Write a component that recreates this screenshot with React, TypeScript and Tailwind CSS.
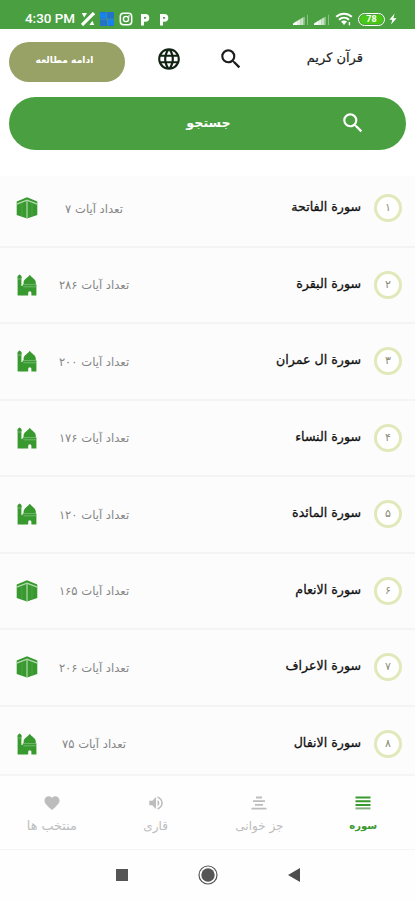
import { MdLanguage, MdSearch, MdVolumeUp, MdFavorite } from 'react-icons/md';

type Place = 'kaaba' | 'mosque';

interface Surah {
  number: string;
  title: string;
  verses: string;
  place: Place;
}

const surahs: Surah[] = [
  { number: '۱', title: 'سورة الفاتحة', verses: '۷', place: 'kaaba' },
  { number: '۲', title: 'سورة البقرة', verses: '۲۸۶', place: 'mosque' },
  { number: '۳', title: 'سورة ال عمران', verses: '۲۰۰', place: 'mosque' },
  { number: '۴', title: 'سورة النساء', verses: '۱۷۶', place: 'mosque' },
  { number: '۵', title: 'سورة المائدة', verses: '۱۲۰', place: 'mosque' },
  { number: '۶', title: 'سورة الانعام', verses: '۱۶۵', place: 'kaaba' },
  { number: '۷', title: 'سورة الاعراف', verses: '۲۰۶', place: 'kaaba' },
  { number: '۸', title: 'سورة الانفال', verses: '۷۵', place: 'mosque' },
];

const KaabaIcon = () => (
  <svg viewBox="0 0 22 22" className="h-[22px] w-[22px]" fill="#38992f">
    <path d="M11 0.2 21.3 4.6V18L11 21.6 0.7 18V4.6Z" />
    <path d="M0.7 7.2 11 3.2 21.3 7.2" fill="none" stroke="#b4dab0" strokeWidth="1.3" />
    <path d="M11 3.4V21" stroke="#a9d3a5" strokeWidth="1.3" />
    <path d="M6 6.5V19M16 6.5V19" stroke="#5dad56" strokeWidth="0.6" />
  </svg>
);

const MosqueIcon = () => (
  <svg viewBox="0 0 20 22" className="h-[22px] w-5" fill="#38992f">
    <path d="M2.6 0.4C3.8 1.2 4.8 2 4.8 3.2L4.4 4.6V12H6V21.4H0.6V4.6L0.4 3.2C0.4 2 1.4 1.2 2.6 0.4Z" />
    <path d="M12.8 0.8C14.4 3.6 18.8 5.2 18.8 8.6V11H6.6V8.6C6.6 5.2 11.2 3.6 12.8 0.8Z" />
    <path d="M5.6 10.6H19.4V21.4H14.4V18.8A1.6 1.6 0 0 0 11.2 18.8V21.4H5.6Z" />
    <path d="M6.4 10.6H19.4M6.4 12.8H19.4" stroke="#8cc587" strokeWidth="0.7" />
    <path d="M0.6 5H4.6" stroke="#8cc587" strokeWidth="0.7" />
  </svg>
);

const SignalIcon = () => (
  <svg viewBox="0 0 16 11" className="h-[11px] w-4" fill="#fff">
    <path d="M0 11V9.5L4 7V11Z" />
    <path d="M4 11V7L7.4 4.9V11Z" opacity=".85" />
    <path d="M7.4 11V4.9L10.6 3V11Z" opacity=".7" />
    <path d="M11 11V3.2L12 2.6V11ZM14 11V1L15 0.4V11Z" opacity=".35" />
  </svg>
);

const ParkingIcon = () => (
  <svg viewBox="0 0 10 13" className="h-[13px] w-[10px]" fill="none" stroke="#fff" strokeWidth="3">
    <path d="M2.5 12.5V2.4H5.4A2.3 2.3 0 0 1 5.4 7.2H2.5" />
  </svg>
);

const StatusBar = () => (
  <div className="flex h-[29px] items-center justify-between bg-[#4aa041] pt-[9px] pr-[18px] pl-[25px] text-white">
    <div className="flex items-center">
      <span className="w-[50px] font-['Roboto',sans-serif] text-[13.4px] leading-4 font-medium whitespace-nowrap">4:30 PM</span>
      <svg viewBox="0 0 14 14" className="ml-[6px] h-[14px] w-[14px]">
        <path d="M1 13 13 1" stroke="#fff" strokeWidth="3.2" />
        <path d="M0.8 1H6L3.2 5.4Z" fill="#fff" />
        <path d="M13.2 13H8.4L11.4 8.8Z" fill="#fff" />
      </svg>
      <svg viewBox="0 0 14 14" className="ml-[5px] h-[14px] w-[14px]">
        <path d="M0 0H14V14H0Z" fill="#2373c8" />
        <path d="M0 1H6V6H0ZM8 8H14V13H8Z" fill="#1684f0" />
        <path d="M6.7 0V7M0 7.2H14M7.4 7V14" stroke="#3d91a5" strokeWidth="1" />
      </svg>
      <svg viewBox="0 0 14 14" className="ml-[5px] h-[14px] w-[14px]" fill="none" stroke="#fff">
        <rect x="1.3" y="1.3" width="11.4" height="11.4" rx="3.2" strokeWidth="1.5" />
        <circle cx="7" cy="7" r="2.6" strokeWidth="1.4" />
        <circle cx="10" cy="4" r=".4" />
      </svg>
      <div className="ml-[7px] flex gap-[9px]">
        <ParkingIcon />
        <ParkingIcon />
      </div>
    </div>
    <div className="flex items-center">
      <SignalIcon />
      <div className="w-[5px]" />
      <SignalIcon />
      <svg viewBox="0 0 18 14" className="ml-[5px] h-[14px] w-[18px]" fill="none" stroke="#fff" strokeWidth="2">
        <path d="M1.2 4.8C5.8.6 12.2.6 16.8 4.8M4 7.8C7 5 11 5 14 7.8" />
        <path d="M6 9.6C7.6 8.2 10.4 8.2 12 9.6L9 13Z" fill="#fff" stroke="none" />
        <path d="M14.4 10V13.4" strokeWidth="1.4" />
      </svg>
      <div className="ml-[5px] flex h-[13px] w-[27px] items-center justify-center rounded-full border-[1.5px] border-white p-px">
        <div className="flex h-full w-full items-center justify-center rounded-full bg-[#48c716] font-['Roboto',sans-serif] text-[9px] leading-none font-bold">78</div>
      </div>
      <svg viewBox="0 0 8 12" className="ml-1 h-3 w-2" fill="#fff">
        <path d="M5.6 0.5 0.4 6.8H3.4L2 11.5 7.6 5.2H4.4Z" />
      </svg>
    </div>
  </div>
);

const Header = () => (
  <header dir="rtl" className="flex h-[68px] items-start pr-[52px] pl-[9px]">
    <h1 className="mt-[19px] w-[55px] text-[13px] leading-5 whitespace-nowrap text-[#222] [-webkit-text-stroke:0.2px]">قرآن کریم</h1>
    <MdSearch className="mt-[17px] mr-[64px] h-[26px] w-[26px] text-[#1c1c1c]" />
    <MdLanguage className="mt-[17px] mr-[36px] h-[26px] w-[26px] text-[#102313]" />
    <button type="button" className="mt-[13px] mr-auto h-[40px] w-[116px] rounded-full bg-[#98a166] pr-[5px] pb-1 text-[9.2px] font-bold text-white">
      ادامه مطالعه
    </button>
  </header>
);

const SurahRow = ({ surah }: { surah: Surah }) => (
  <li className="flex h-[76.5px] shrink-0 items-center border-b-2 border-[#f4f4f4] pr-[13px] pl-4">
    <span className="flex h-7 w-7 shrink-0 items-center justify-center rounded-full border-[3px] border-[#e1e8b9] bg-white text-[11px] text-[#8c8c7c]">
      {surah.number}
    </span>
    <span className="mr-[13px] flex-1 pb-[2px] text-[12.6px] leading-6 whitespace-nowrap text-[#111] [-webkit-text-stroke:0.3px]">{surah.title}</span>
    <span className="flex w-20 justify-center pt-[2px] text-[11.6px] whitespace-nowrap text-[#858585]">
      تعداد آیات {surah.verses}
    </span>
    <span className="mr-4 flex w-[22px] justify-center">
      {surah.place === 'kaaba' ? <KaabaIcon /> : <MosqueIcon />}
    </span>
  </li>
);

const BottomTabs = () => (
  <nav dir="rtl" className="grid h-[76px] shrink-0 grid-cols-4 border-t-2 border-b border-[#f5f5f5] bg-[#fefefe] text-[12px] text-[#bdbdbd]">
    <div className="flex flex-col items-center pt-5 font-bold text-[#38992f]">
      <svg viewBox="0 0 16 14" className="h-[14px] w-4" strokeWidth="2">
        <path d="M0.5 1.5H15.5M0.5 5.2H15.5M0.5 8.9H15.5" stroke="#38992f" />
        <path d="M0.5 12.4H15.5" stroke="#86ae82" />
      </svg>
      <span className="mt-[6px] text-[10px] leading-5">سوره</span>
    </div>
    <div className="flex flex-col items-center pt-5">
      <svg viewBox="0 0 16 14" className="h-[14px] w-4" stroke="#bdbdbd" strokeWidth="1.8">
        <path d="M5 1.5H11M2 5.2H14M4 8.9H12M0.5 12.6H15.5" />
      </svg>
      <span className="mt-[6px] leading-5">جز خوانی</span>
    </div>
    <div className="flex flex-col items-center pt-[18px]">
      <MdVolumeUp className="h-[18px] w-[18px]" />
      <span className="mt-1 leading-5">قاری</span>
    </div>
    <div className="flex flex-col items-center pt-[18px]">
      <MdFavorite className="h-[18px] w-[18px]" />
      <span className="mt-1 text-[12.8px] leading-5">منتخب ها</span>
    </div>
  </nav>
);

const SystemNav = () => (
  <div className="flex flex-1 items-start justify-center bg-[#fefefe] pt-[15px]">
    <svg viewBox="0 0 12 12" className="mt-1 h-3 w-3">
      <path d="M0 0H12V12H0Z" fill="#555" />
    </svg>
    <svg viewBox="0 0 20 20" className="mx-[70px] h-5 w-5">
      <circle cx="10" cy="10" r="9" fill="none" stroke="#555" strokeWidth="1.2" />
      <circle cx="10" cy="10" r="6.7" fill="#555" />
    </svg>
    <svg viewBox="0 0 12 14" className="mt-[3px] h-[14px] w-3">
      <path d="M12 0V14L0 7Z" fill="#4d4d4d" />
    </svg>
  </div>
);

export default function App() {
  return (
    <div className="flex h-[900px] w-[415px] flex-col overflow-hidden bg-white font-['DejaVu_Sans',sans-serif]">
      <StatusBar />
      <Header />
      <button type="button" dir="rtl" className="mx-[9px] flex h-[53px] shrink-0 items-center rounded-full bg-[#4aa041] pr-[40px] pb-[2px] text-white">
        <MdSearch className="h-[26px] w-[26px]" />
        <span className="mr-[109px] w-[45px] text-[12.7px] font-bold whitespace-nowrap">جستجو</span>
      </button>
      <div className="mt-[26px] h-[598px] shrink-0 overflow-hidden bg-[#fcfcfc]">
        <ul dir="rtl" className="-mt-[5px] flex flex-col">
          {surahs.map((surah) => (
            <SurahRow key={surah.number} surah={surah} />
          ))}
        </ul>
      </div>
      <BottomTabs />
      <SystemNav />
    </div>
  );
}
